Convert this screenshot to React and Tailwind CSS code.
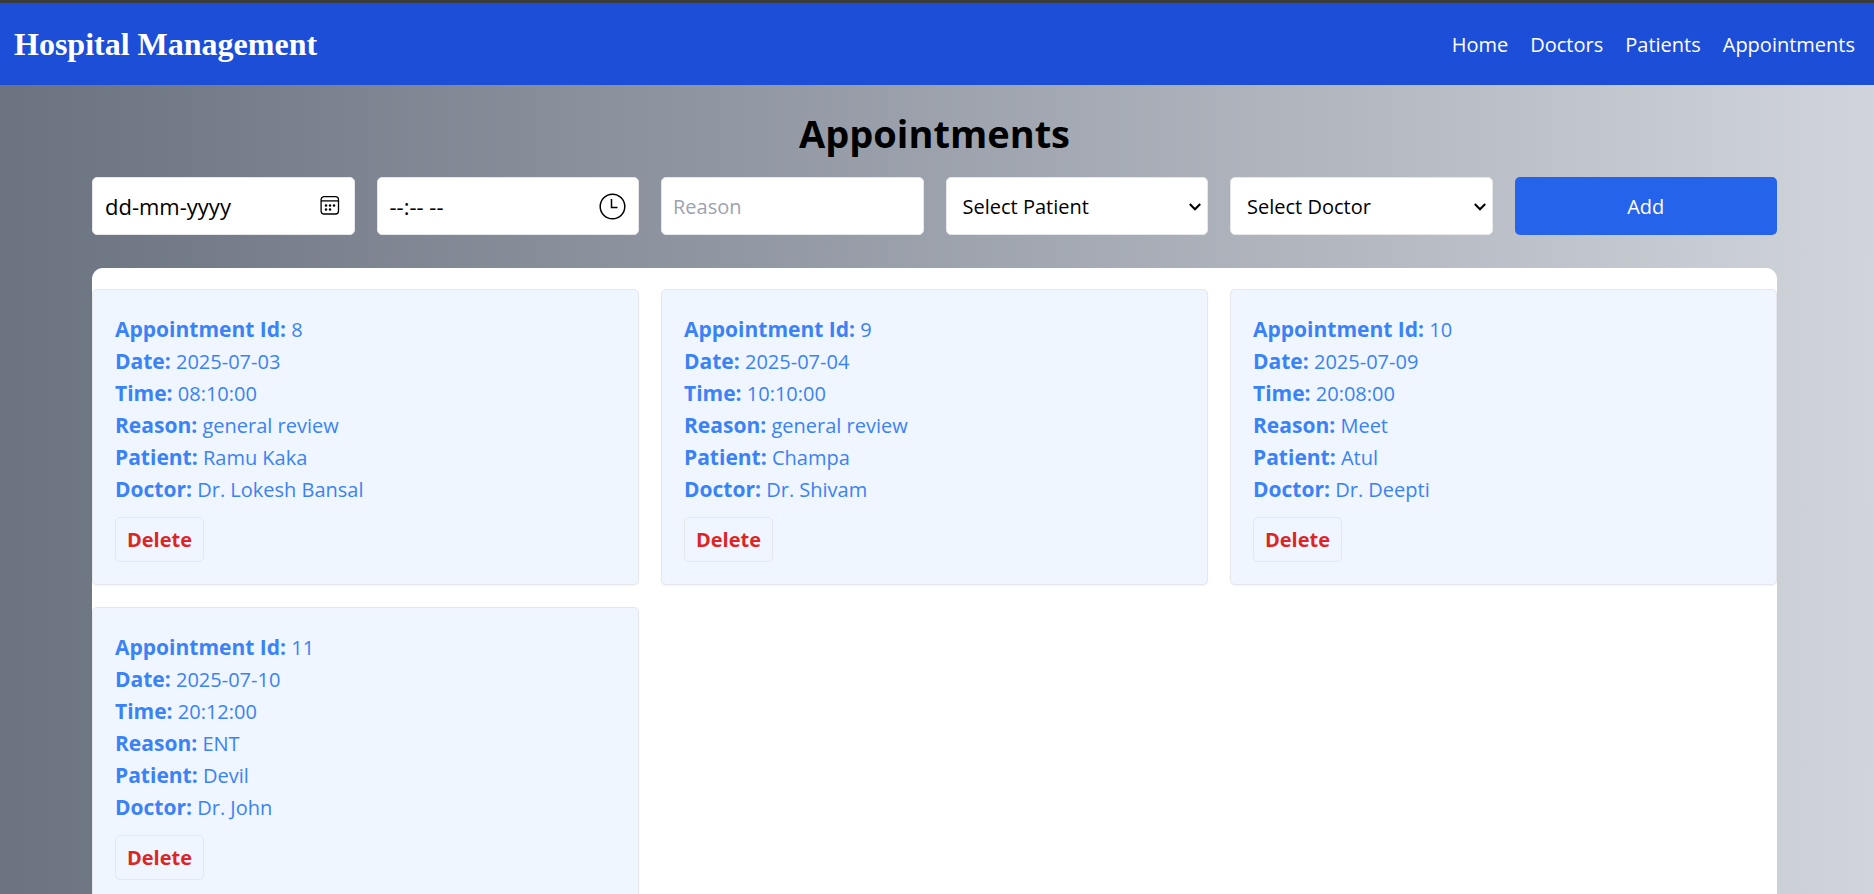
const appointments = [
  { id: 8, date: "2025-07-03", time: "08:10:00", reason: "general review", patient: "Ramu Kaka", doctor: "Dr. Lokesh Bansal" },
  { id: 9, date: "2025-07-04", time: "10:10:00", reason: "general review", patient: "Champa", doctor: "Dr. Shivam" },
  { id: 10, date: "2025-07-09", time: "20:08:00", reason: "Meet", patient: "Atul", doctor: "Dr. Deepti" },
  { id: 11, date: "2025-07-10", time: "20:12:00", reason: "ENT", patient: "Devil", doctor: "Dr. John" },
];

const links = ["Home", "Doctors", "Patients", "Appointments"];

function CalendarIcon() {
  return (
    <svg width="24" height="24" viewBox="0 0 24 24" fill="none" stroke="currentColor" strokeWidth="1.3" aria-hidden="true">
      <rect x="3.1" y="2.6" width="17.4" height="17.4" rx="3" />
      <path d="M3.1 6.9h17.4" />
      <g fill="currentColor" stroke="none">
        <circle cx="8" cy="11.5" r="1.25" />
        <circle cx="12" cy="11.5" r="1.25" />
        <circle cx="16" cy="11.5" r="1.25" />
        <circle cx="8" cy="15.5" r="1.25" />
        <circle cx="12" cy="15.5" r="1.25" />
      </g>
    </svg>
  );
}

function ClockIcon() {
  return (
    <svg width="27" height="27" viewBox="0 0 27 27" fill="none" stroke="currentColor" strokeWidth="1.5" aria-hidden="true">
      <circle cx="13.5" cy="13.5" r="12.3" />
      <path d="M12.5 6v8.5h6" />
    </svg>
  );
}

function PickerField({ label, placeholder, pickerLabel, children }) {
  return (
    <div className="flex h-[58px] min-w-0 items-center justify-between rounded-[5px] border border-gray-200 bg-white px-3 text-[22px]">
      <input aria-label={label} placeholder={placeholder} className="w-full min-w-0 bg-transparent text-black outline-none placeholder:text-black" />
      <button type="button" aria-label={pickerLabel} className="shrink-0 text-black">
        {children}
      </button>
    </div>
  );
}

function SelectField({ label, placeholder }) {
  return (
    <div className="relative min-w-0">
      <select aria-label={label} className="h-[58px] w-full appearance-none rounded-[5px] border border-gray-200 bg-white pl-4 pr-6 pt-[2px] text-black outline-none">
        <option>{placeholder}</option>
      </select>
      <svg className="pointer-events-none absolute right-[7px] top-[26px]" width="12" height="8" viewBox="0 0 12 8" fill="none" stroke="black" strokeWidth="2.1" aria-hidden="true">
        <path d="M0.8 1l5.2 5.2L11.2 1" />
      </svg>
    </div>
  );
}

function Detail({ label, value }) {
  return (
    <p>
      <strong className="text-[21px] font-bold leading-none">{label}:</strong> {value}
    </p>
  );
}

function AppointmentCard({ item }) {
  return (
    <article className="rounded-[5px] border border-gray-200 bg-[#eff6ff] px-[22px] pb-[22px] pt-6 text-[#3b82f6] shadow-xs">
      <Detail label="Appointment Id" value={item.id} />
      <Detail label="Date" value={item.date} />
      <Detail label="Time" value={item.time} />
      <Detail label="Reason" value={item.reason} />
      <Detail label="Patient" value={item.patient} />
      <Detail label="Doctor" value={item.doctor} />
      <button type="button" className="mt-[11px] block h-[45px] rounded-[5px] border border-gray-200 px-[11px] font-bold text-[#dc2626]">
        Delete
      </button>
    </article>
  );
}

export default function App() {
  return (
    <div className="min-h-screen bg-[#3b3b3b] pt-[3px] font-['Open_Sans',sans-serif] text-[20px] leading-[32px]">
      <div className="min-h-screen bg-linear-to-r from-[#6b7280] to-[#d1d5db]">
        <nav className="flex h-[82px] items-center justify-between bg-[#1d4ed8] pl-[14px] pr-[19px] text-white">
          <a href="#home" className="font-['Liberation_Serif',serif] text-[32px] font-bold">
            Hospital Management
          </a>
          <ul className="flex gap-[22px] pt-[2px]">
            {links.map((name) => (
              <li key={name}>
                <a href={`#${name.toLowerCase()}`}>{name}</a>
              </li>
            ))}
          </ul>
        </nav>

        <main className="pb-[22px] pl-[92px] pr-[97px] pt-6">
          <h1 className="mb-5 text-center text-[38px] font-bold leading-[48px] text-black">Appointments</h1>

          <form className="grid grid-cols-6 gap-[22px]" onSubmit={(e) => e.preventDefault()}>
            <PickerField label="Date" placeholder="dd-mm-yyyy" pickerLabel="Choose date">
              <CalendarIcon />
            </PickerField>
            <PickerField label="Time" placeholder="--:-- --" pickerLabel="Choose time">
              <ClockIcon />
            </PickerField>
            <input aria-label="Reason" placeholder="Reason" className="h-[58px] min-w-0 rounded-[5px] border border-gray-200 bg-white px-[11px] text-black outline-none placeholder:text-[#9ca3af]" />
            <SelectField label="Patient" placeholder="Select Patient" />
            <SelectField label="Doctor" placeholder="Select Doctor" />
            <button type="submit" className="h-[58px] rounded-[5px] bg-[#2563eb] pt-[2px] text-white">
              Add
            </button>
          </form>

          <section className="mt-[33px] grid grid-cols-3 gap-[22px] rounded-[11px] bg-white py-[21px]">
            {appointments.map((item) => (
              <AppointmentCard key={item.id} item={item} />
            ))}
          </section>
        </main>
      </div>
    </div>
  );
}
